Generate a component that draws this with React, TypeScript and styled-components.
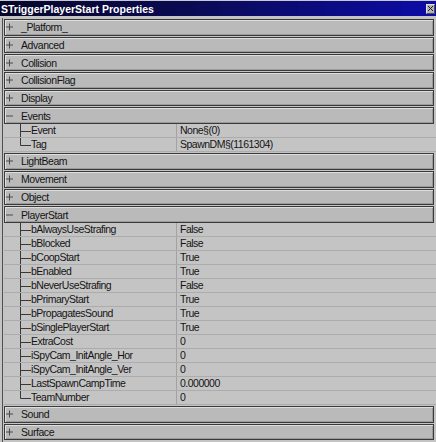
import React from "react";
import styled, { createGlobalStyle } from "styled-components";

const GlobalStyle = createGlobalStyle`
  html, body { margin: 0; padding: 0; background: #c5c4c5; }
  * { box-sizing: border-box; }
`;

const Window = styled.div`
  width: 436px;
  height: 442px;
  background: #c5c4c5;
  font-family: "Liberation Sans", Arial, sans-serif;
  color: #141414;
  overflow: hidden;
  display: flex;
  flex-direction: column;
`;

const TitleBar = styled.div`
  height: 16px;
  flex: none;
  display: flex;
  align-items: center;
  justify-content: space-between;
  padding: 0 1px 0 1px;
  border-top: 1px solid #c8c8d0;
  background: linear-gradient(90deg, #06062a 0%, #0a0a55 45%, #0c0ca8 100%);
`;

const Title = styled.span`
  color: #ffffff;
  font-weight: bold;
  font-size: 10.5px;
  line-height: 14px;
  white-space: nowrap;
`;

const CloseButton = styled.div`
  width: 9px;
  height: 10px;
  background: #b4b4b4;
  border: 1px solid #e0e0e0;
  border-right-color: #505050;
  border-bottom-color: #505050;
  display: flex;
  align-items: center;
  justify-content: center;
`;

const Body = styled.div`
  flex: 1;
  margin: 2px 0 0 2px;
  border-left: 1px solid #505050;
  padding: 0 2px 0 1px;
  display: flex;
  flex-direction: column;
`;

const Category = styled.div`
  height: 16.7px;
  margin-top: 1px;
  flex: none;
  display: flex;
  align-items: center;
  background: #bababa;
  border: 1px solid #3a3a3a;
  box-shadow: inset 1px 1px 0 #dedede, inset -1px -1px 0 #9a9a9a;
  font-size: 10.5px;
  letter-spacing: -0.45px;
  line-height: 14px;
`;

const ToggleIcon = styled.svg`
  width: 8px;
  height: 8px;
  margin-left: 1px;
  margin-right: 7px;
  flex: none;
`;

const PropRow = styled.div`
  height: 14px;
  flex: none;
  display: grid;
  grid-template-columns: 173px 1fr;
  margin-right: -2px;
  border-bottom: 1px solid #acacac;
  font-size: 10.5px;
  letter-spacing: -0.5px;
  line-height: 13px;
`;

const NameCell = styled.div`
  display: flex;
  align-items: stretch;
  border-right: 1px solid #a2a2a2;
  white-space: nowrap;
  overflow: hidden;
`;

const NameText = styled.span`
  line-height: 13px;
`;

const TreeLine = styled.svg`
  width: 27px;
  height: 14px;
  flex: none;
  margin-bottom: -1px;
`;

const ValueCell = styled.div`
  padding-left: 3px;
  white-space: nowrap;
  overflow: hidden;
`;

type Prop = { name: string; value: string };
type Group = { name: string; open?: boolean; props?: Prop[] };

const groups: Group[] = [
  { name: "_Platform_" },
  { name: "Advanced" },
  { name: "Collision" },
  { name: "CollisionFlag" },
  { name: "Display" },
  {
    name: "Events",
    open: true,
    props: [
      { name: "Event", value: "None§(0)" },
      { name: "Tag", value: "SpawnDM§(1161304)" },
    ],
  },
  { name: "LightBeam" },
  { name: "Movement" },
  { name: "Object" },
  {
    name: "PlayerStart",
    open: true,
    props: [
      { name: "bAlwaysUseStrafing", value: "False" },
      { name: "bBlocked", value: "False" },
      { name: "bCoopStart", value: "True" },
      { name: "bEnabled", value: "True" },
      { name: "bNeverUseStrafing", value: "False" },
      { name: "bPrimaryStart", value: "True" },
      { name: "bPropagatesSound", value: "True" },
      { name: "bSinglePlayerStart", value: "True" },
      { name: "ExtraCost", value: "0" },
      { name: "iSpyCam_InitAngle_Hor", value: "0" },
      { name: "iSpyCam_InitAngle_Ver", value: "0" },
      { name: "LastSpawnCampTime", value: "0.000000" },
      { name: "TeamNumber", value: "0" },
    ],
  },
  { name: "Sound" },
  { name: "Surface" },
];

const Toggle: React.FC<{ open?: boolean }> = ({ open }) => (
  <ToggleIcon viewBox="0 0 8 8">
    <line x1="0" y1="4" x2="7" y2="4" stroke="#4a4a4a" strokeWidth="1" />
    {!open && <line x1="3.5" y1="0.5" x2="3.5" y2="7.5" stroke="#4a4a4a" strokeWidth="1" />}
  </ToggleIcon>
);

const Branch: React.FC<{ last: boolean }> = ({ last }) => (
  <TreeLine viewBox="0 0 27 14">
    <line x1="16.5" y1="0" x2="16.5" y2={last ? 7.5 : 14} stroke="#383838" strokeWidth="1" />
    <line x1="16.5" y1="7.5" x2="27" y2="7.5" stroke="#383838" strokeWidth="1" />
  </TreeLine>
);

export default function App() {
  return (
    <Window>
      <GlobalStyle />
      <TitleBar>
        <Title>STriggerPlayerStart Properties</Title>
        <CloseButton>
          <svg width="5" height="5" viewBox="0 0 5 5">
            <path d="M0 0 L5 5 M5 0 L0 5" stroke="#202020" strokeWidth="1" />
          </svg>
        </CloseButton>
      </TitleBar>
      <Body>
        {groups.map((g) => (
          <React.Fragment key={g.name}>
            <Category>
              <Toggle open={g.open} />
              <span>{g.name}</span>
            </Category>
            {g.open &&
              g.props?.map((p, i) => (
                <PropRow key={p.name}>
                  <NameCell>
                    <Branch last={i === (g.props?.length ?? 0) - 1} />
                    <NameText>{p.name}</NameText>
                  </NameCell>
                  <ValueCell>{p.value}</ValueCell>
                </PropRow>
              ))}
          </React.Fragment>
        ))}
      </Body>
    </Window>
  );
}
